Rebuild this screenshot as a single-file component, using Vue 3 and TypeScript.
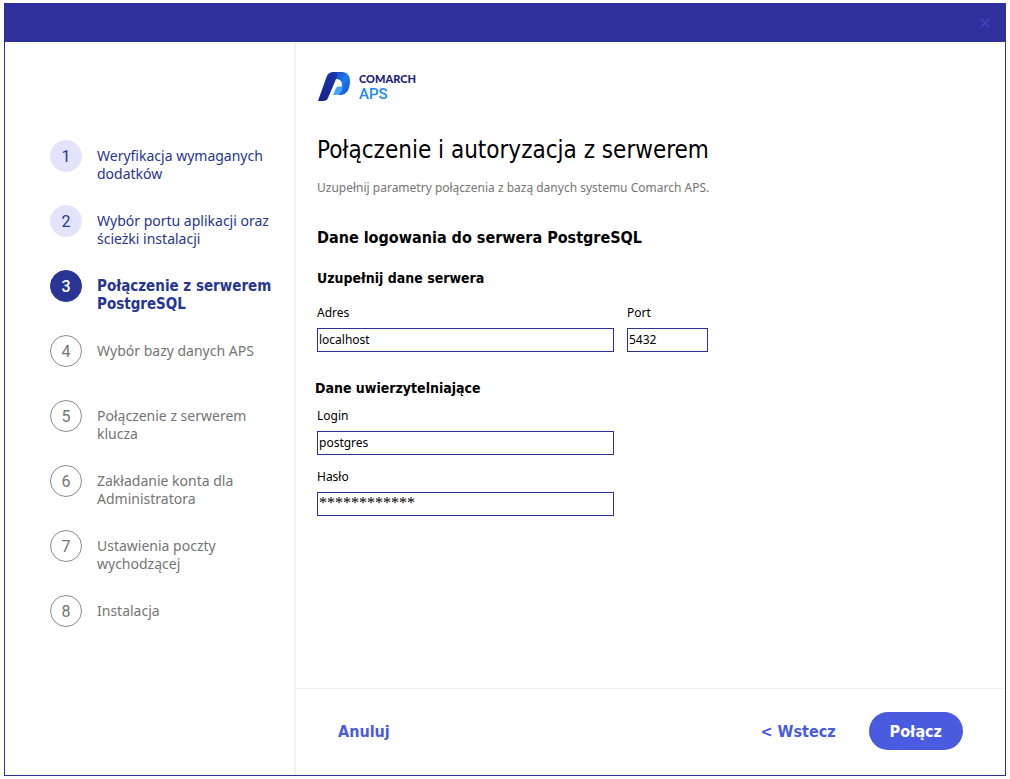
<script setup lang="ts">
import { ref } from 'vue'

type StepState = 'done' | 'current' | 'todo'

interface Step {
  label: string
  state: StepState
}

const steps: Step[] = [
  { label: 'Weryfikacja wymaganych dodatków', state: 'done' },
  { label: 'Wybór portu aplikacji oraz ścieżki instalacji', state: 'done' },
  { label: 'Połączenie z serwerem PostgreSQL', state: 'current' },
  { label: 'Wybór bazy danych APS', state: 'todo' },
  { label: 'Połączenie z serwerem klucza', state: 'todo' },
  { label: 'Zakładanie konta dla Administratora', state: 'todo' },
  { label: 'Ustawienia poczty wychodzącej', state: 'todo' },
  { label: 'Instalacja', state: 'todo' },
]

const address = ref('localhost')
const port = ref('5432')
const login = ref('postgres')
const password = ref('************')
</script>

<template>
  <div class="window">
    <header class="titlebar">
      <button class="close" type="button" aria-label="Zamknij">
        <svg width="10" height="10" viewBox="0 0 10 10"><path d="M1 1L9 9M9 1L1 9" /></svg>
      </button>
    </header>

    <div class="body">
      <nav class="sidebar">
        <ol class="steps">
          <li v-for="(step, i) in steps" :key="step.label" class="step" :class="step.state">
            <span class="number">{{ i + 1 }}</span>
            <span class="label">{{ step.label }}</span>
          </li>
        </ol>
      </nav>

      <form class="main" @submit.prevent>
        <div class="content">
          <svg class="logo" width="100" height="34" viewBox="0 0 100 34" role="img" aria-label="Comarch APS">
            <defs>
              <linearGradient id="leg" x1="0" y1="1" x2="1" y2="0">
                <stop offset="0" stop-color="#14218c" />
                <stop offset="1" stop-color="#1a35ac" />
              </linearGradient>
              <linearGradient id="bowl" x1="0" y1="0" x2="1" y2="1">
                <stop offset="0" stop-color="#1740b4" />
                <stop offset="0.5" stop-color="#1b7cf0" />
                <stop offset="1" stop-color="#1550cc" />
              </linearGradient>
            </defs>
            <path fill="url(#bowl)" d="M16 2H25C30 2 33 5.500 33 11C33 18.500 30 24.500 24 25H21C23.500 22.500 25 18 25 14.500C25 11 22.500 8.500 17.500 9Z" />
            <path fill="url(#leg)" d="M1 31L9.500 7C10.700 3.500 13 2 16.500 2C21 2 20.500 5 19 9L18 11.500L11 28C10 30.200 8.500 31 6 31Z" />
            <path fill="#43a5ff" d="M16.200 25L18.300 19.500C19 17.600 20.200 16.600 22 16.600H25.500C25.500 20.500 23.500 24.500 19.500 25Z" />
            <text class="brand" x="42" y="13">COMARCH</text>
            <text class="product" x="42" y="29">APS</text>
          </svg>

          <h1>Połączenie i autoryzacja z serwerem</h1>
          <p class="intro">Uzupełnij parametry połączenia z bazą danych systemu Comarch APS.</p>

          <h2>Dane logowania do serwera PostgreSQL</h2>

          <h3>Uzupełnij dane serwera</h3>
          <div class="row">
            <div class="field wide">
              <label for="address">Adres</label>
              <input id="address" v-model="address" type="text" />
            </div>
            <div class="field narrow">
              <label for="port">Port</label>
              <input id="port" v-model="port" type="text" inputmode="numeric" />
            </div>
          </div>

          <h3 class="credentials">Dane uwierzytelniające</h3>
          <div class="field wide login">
            <label for="login">Login</label>
            <input id="login" v-model="login" type="text" />
          </div>
          <div class="field wide password">
            <label for="password">Hasło</label>
            <input id="password" v-model="password" class="masked" type="text" autocomplete="off" />
          </div>
        </div>

        <footer class="footer">
          <button class="link" type="button">Anuluj</button>
          <span class="spacer"></span>
          <button class="link" type="button">&lt; Wstecz</button>
          <button class="primary" type="submit">Połącz</button>
        </footer>
      </form>
    </div>
  </div>
</template>

<style>
body {
  background: #fff;
}
</style>

<style scoped>
* {
  box-sizing: border-box;
}

.window {
  display: flex;
  flex-direction: column;
  min-height: calc(100vh - 6px);
  margin: 3px 4px;
  border: 1px solid #2f2f9d;
  font-family: Tahoma, "Noto Sans", sans-serif;
  color: #000;
}

.titlebar {
  display: flex;
  align-items: center;
  justify-content: flex-end;
  height: 38px;
  padding-right: 10px;
  background: #2f2f9d;
}

button {
  border: 0;
  background: none;
  font-family: inherit;
  cursor: pointer;
}

.close {
  display: flex;
  padding: 5px;
}

.close path {
  fill: none;
  stroke: #4040bd;
  stroke-width: 2;
}

.body {
  display: flex;
  flex: 1;
}

.sidebar {
  flex: 0 0 291px;
  padding: 98px 20px 40px 45px;
  border-right: 2px solid #f3f3f3;
}

.steps {
  display: grid;
  grid-auto-rows: 65px;
  margin: 0;
  padding: 0;
  list-style: none;
}

.step {
  display: flex;
  gap: 15px;
  color: #757575;
}

.number {
  display: flex;
  flex: 0 0 32px;
  align-items: center;
  justify-content: center;
  height: 32px;
  border: 1px solid #8c8c8c;
  border-radius: 50%;
  font-family: Roboto, sans-serif;
  font-size: 16px;
}

.label {
  padding-top: 7px;
  font-size: 14px;
  line-height: 18px;
}

.done {
  color: #283593;
}

.done .number {
  border-color: #e3e3fb;
  background: #e3e3fb;
}

.current {
  color: #283593;
}

.current .label,
h1,
h2,
h3,
.link,
.primary {
  font-family: Tahoma, "DejaVu Sans Condensed", "DejaVu Sans", sans-serif;
  font-weight: bold;
}

.current .label {
  font-size: 15px;
}

.current .number {
  border-color: #283593;
  background: #283593;
  color: #fff;
  font-weight: 500;
}

.main {
  display: flex;
  flex: 1;
  flex-direction: column;
  min-width: 0;
}

.content {
  flex: 1;
  padding: 28px 21px 20px;
}

.logo {
  display: block;
}

.brand {
  fill: #1a237e;
  font: 900 11px Lato, sans-serif;
}

.product {
  fill: #1e88f5;
  font: 500 15px Roboto, sans-serif;
}

h1 {
  margin: 30px 0 0;
  font-size: 24px;
  font-weight: normal;
  line-height: 32px;
}

.intro {
  margin: 12px 0 0;
  color: #757575;
  font-size: 12px;
  line-height: 20px;
}

h2 {
  margin: 30px 0 0;
  font-size: 16px;
  line-height: 20px;
}

h3 {
  margin: 21px 0 0;
  font-size: 14px;
  line-height: 18px;
}

.row {
  display: flex;
  gap: 13px;
  margin-top: 18px;
}

.field {
  display: flex;
  flex-direction: column;
  gap: 7px;
  font-size: 12px;
  line-height: 16px;
}

.wide {
  width: 297px;
}

.narrow {
  width: 81px;
}

input {
  width: 100%;
  height: 24px;
  padding: 0 1px 2px;
  border: 1px solid #2f2f9d;
  background: #fff;
  color: #000;
  font: inherit;
}

.masked {
  font-family: "Liberation Serif", serif;
  font-size: 16px;
}

.credentials {
  margin: 27px 0 0 -2px;
}

.login {
  margin-top: 11px;
}

.password {
  margin-top: 14px;
}

.footer {
  display: flex;
  align-items: center;
  height: 87px;
  padding: 0 42px 2px;
  border-top: 1px solid #f0f0f0;
}

.spacer {
  flex: 1;
}

.link {
  padding: 0;
  color: #4a5be0;
  font-size: 16px;
}

.primary {
  height: 38px;
  margin-left: 33px;
  padding: 0 21px;
  border-radius: 19px;
  background: #4a5be0;
  color: #fff;
  font-size: 16px;
}
</style>
